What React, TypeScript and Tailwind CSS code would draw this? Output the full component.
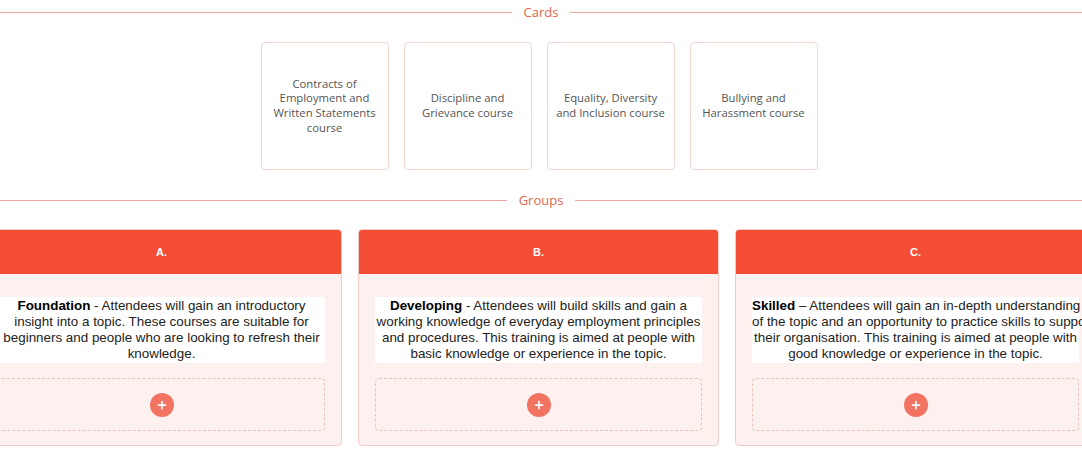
import { Plus } from 'lucide-react';

const cards = [
  ['Contracts of', 'Employment and', 'Written Statements', 'course'],
  ['Discipline and', 'Grievance course'],
  ['Equality, Diversity', 'and Inclusion course'],
  ['Bullying and', 'Harassment course'],
];

const groups = [
  {
    key: 'A.',
    title: 'Foundation',
    sep: ' - ',
    lines: [
      'Attendees will gain an introductory',
      'insight into a topic. These courses are suitable for',
      'beginners and people who are looking to refresh their',
      'knowledge.',
    ],
  },
  {
    key: 'B.',
    title: 'Developing',
    sep: ' - ',
    lines: [
      'Attendees will build skills and gain a',
      'working knowledge of everyday employment principles',
      'and procedures. This training is aimed at people with',
      'basic knowledge or experience in the topic.',
    ],
  },
  {
    key: 'C.',
    title: 'Skilled',
    sep: ' \u2013 ',
    lines: [
      'Attendees will gain an in-depth understanding',
      'of the topic and an opportunity to practice skills to support',
      'their organisation. This training is aimed at people with',
      'good knowledge or experience in the topic.',
    ],
  },
];

function Divider({ label }: { label: string }) {
  return (
    <div className="flex items-center gap-3 h-4">
      <div className="flex-1 h-px bg-[#e9a89b]" />
      <span className="text-[13px] leading-4 text-[#e26650] font-['Open_Sans',sans-serif]">{label}</span>
      <div className="flex-1 h-px bg-[#e9a89b]" />
    </div>
  );
}

export default function App() {
  return (
    <div className="w-[1082px] h-[468px] bg-white overflow-hidden pt-1">
      <Divider label="Cards" />
      <div className="flex justify-center gap-[15px] mt-[22px] pr-1">
        {cards.map((c, i) => (
          <div
            key={i}
            className="w-[128px] h-[128px] rounded border border-[#f1d6d2] flex items-center justify-center text-center"
          >
            <div className="text-[11.3px] leading-[14.7px] text-[#555] font-['Open_Sans',sans-serif]">
              {c.map((l, j) => (
                <div key={j}>{l}</div>
              ))}
            </div>
          </div>
        ))}
      </div>
      <div className="mt-[22px]">
        <Divider label="Groups" />
      </div>
      <div className="flex justify-center gap-4 mt-[21px] ml-[-5px]">
        {groups.map(g => (
          <div
            key={g.key}
            className="w-[361px] shrink-0 rounded border border-[#f0cdc8] bg-[#fdf1f0] overflow-hidden"
          >
            <div className="h-11 bg-[#f44d35] flex items-center justify-center text-white text-[11px] font-bold font-['Liberation_Sans',Arial,sans-serif]">
              {g.key}
            </div>
            <div className="px-4 pt-[23px] pb-[14px]">
              <div className="bg-white text-center text-[13.4px] leading-4 text-[#222] font-['Liberation_Sans',Arial,sans-serif] py-px whitespace-nowrap">
                <div>
                  <b className="text-black">{g.title}</b>
                  {g.sep}
                  {g.lines[0]}
                </div>
                {g.lines.slice(1).map((l, i) => (
                  <div key={i}>{l}</div>
                ))}
              </div>
              <div className="mt-[15px] h-[53px] rounded border border-dashed border-[#e9c3be] flex items-center justify-center">
                <div className="w-6 h-6 rounded-full bg-[#f27361] flex items-center justify-center">
                  <Plus className="w-3 h-3 text-white" strokeWidth={3.5} />
                </div>
              </div>
            </div>
          </div>
        ))}
      </div>
    </div>
  );
}
